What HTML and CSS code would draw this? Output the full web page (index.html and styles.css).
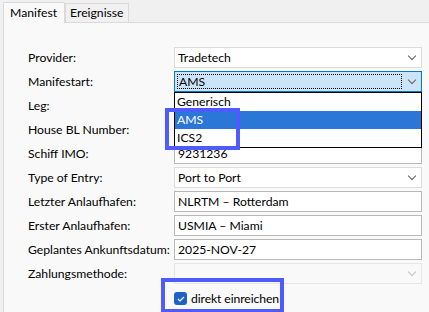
FILE: index.html
```html
<!DOCTYPE html>
<html lang="de">
<head>
    <meta charset="UTF-8">
    <title>Manifest</title>
    <link rel="stylesheet" href="styles.css">
</head>
<body>
    <div class="tabs">
        <div class="tab active">Manifest</div>
        <div class="tab">Ereignisse</div>
    </div>

    <div class="panel">
        <div class="form">
            <label class="lbl">Provider:</label>
            <div class="combo"><span>Tradetech</span><i class="chev"></i></div>

            <label class="lbl">Manifestart:</label>
            <div class="combo focused"><span class="focus-box">AMS</span><i class="chev"></i></div>

            <label class="lbl">Leg:</label>
            <div class="field"></div>

            <label class="lbl">House BL Number:</label>
            <div class="field"></div>

            <label class="lbl">Schiff IMO:</label>
            <div class="field">9231236</div>

            <label class="lbl">Type of Entry:</label>
            <div class="combo"><span>Port to Port</span><i class="chev"></i></div>

            <label class="lbl">Letzter Anlaufhafen:</label>
            <div class="field">NLRTM – Rotterdam</div>

            <label class="lbl">Erster Anlaufhafen:</label>
            <div class="field">USMIA – Miami</div>

            <label class="lbl">Geplantes Ankunftsdatum:</label>
            <div class="field">2025-NOV-27</div>

            <label class="lbl">Zahlungsmethode:</label>
            <div class="combo disabled"><span></span><i class="chev"></i></div>

            <span></span>
            <div class="check-row">
                <span class="checkbox">
                    <svg width="8" height="6" viewBox="0 0 8 6"><path d="M1 3 L3 5 L7 1" fill="none" stroke="#fff" stroke-width="1.1"/></svg>
                </span>
                direkt einreichen
            </div>
        </div>

        <!-- aufgeklappte Liste -->
        <ul class="dropdown">
            <li>Generisch</li>
            <li class="sel">AMS</li>
            <li>ICS2</li>
        </ul>

        <!-- Markierungen -->
        <div class="mark mark-list"></div>
        <div class="mark mark-check"></div>
    </div>
</body>
</html>
```

FILE: styles.css
```css
/* Grundlayout */
* {
    margin: 0;
    padding: 0;
    box-sizing: border-box;
}

body {
    background: #f0f0f0;
    font-family: Lato, "Noto Sans", sans-serif;
    font-size: 12.2px;
    color: #000;
    width: 429px;
    height: 312px;
    overflow: hidden;
}

/* Reiter */
.tabs {
    display: flex;
    align-items: flex-end;
    height: 22px;
    padding-left: 3px;
}

.tab {
    height: 19px;
    padding: 0 4px;
    line-height: 18px;
    border: 1px solid #dadada;
    border-bottom: none;
    background: #f0f0f0;
}

.tab.active {
    height: 21px;
    padding: 1px 7px 0 6px;
    background: #f9f9f9;
    position: relative;
    top: 1px;
    z-index: 1;
}

/* Inhaltsbereich */
.panel {
    position: relative;
    margin-left: 3px;
    height: 290px;
    background: #f9f9f9;
    border-left: 1px solid #dadada;
    border-top: 1px solid #dadada;
    padding: 24px 0 0 24px;
}

.form {
    display: grid;
    grid-template-columns: 146px 248px;
    grid-auto-rows: 21px;
    row-gap: 3px;
}

.lbl {
    display: flex;
    align-items: center;
    white-space: nowrap;
}

.field,
.combo {
    display: flex;
    align-items: center;
    border: 1px solid #b9b9b9;
    background: #fff;
    padding-left: 3px;
    white-space: nowrap;
}

.combo {
    justify-content: space-between;
    border-color: #dcdcdc;
    padding-right: 6px;
}

.combo.focused {
    background: #cce4f7;
    border-color: #0078d7;
    padding: 2px 6px 2px 2px;
}

.focus-box {
    flex: 1;
    height: 100%;
    display: flex;
    align-items: center;
    padding-left: 1px;
    border: 1px dotted #000;
    margin-right: 7px;
}

.combo.disabled {
    background: #f9f9f9;
    border-color: #e6e6e6;
}

.chev {
    width: 6px;
    height: 6px;
    border-right: 1px solid #606060;
    border-bottom: 1px solid #606060;
    transform: rotate(45deg);
    margin-top: -4px;
}

.disabled .chev {
    border-color: #c0c0c0;
}

.check-row {
    display: flex;
    align-items: center;
    gap: 4px;
    padding-top: 2px;
    white-space: nowrap;
    letter-spacing: -0.1px;
}

.checkbox {
    width: 13px;
    height: 13px;
    border-radius: 3px;
    background: #1c62c7;
    display: flex;
    align-items: center;
    justify-content: center;
}

/* aufgeklappte Liste */
.dropdown {
    position: absolute;
    left: 170px;
    top: 69px;
    width: 248px;
    list-style: none;
    background: #fff;
    border: 1px solid #000;
}

.dropdown li {
    height: 18px;
    line-height: 18px;
    padding-left: 2px;
}

.dropdown li.sel {
    background: #2a77d8;
    color: #fff;
}

/* Markierungen */
.mark {
    position: absolute;
    border: 4px solid #4f5bff;
}

.mark-list {
    left: 161px;
    top: 85px;
    width: 75px;
    height: 42px;
}

.mark-check {
    left: 157px;
    top: 255px;
    width: 123px;
    height: 35px;
}
```
